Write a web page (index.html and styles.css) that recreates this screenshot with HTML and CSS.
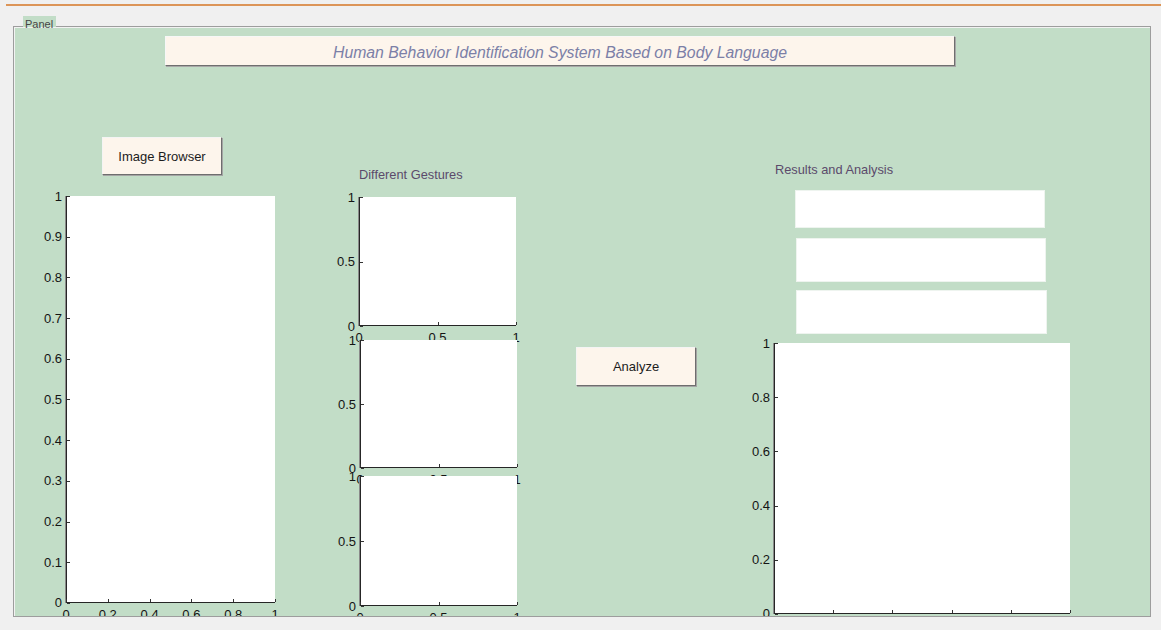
FILE: index.html
```html
<!DOCTYPE html>
<html lang="en">
<head>
<meta charset="utf-8">
<title>Human Behavior Identification System</title>
<link rel="stylesheet" href="styles.css">
</head>
<body>
<div class="topline"></div>

<div class="panel">
  <span class="panel-label">Panel</span>
  <div class="panel-body">
    <div class="title">Human Behavior Identification System Based on Body Language</div>

    <div class="row">
      <!-- image column -->
      <div class="col col-image">
        <button class="btn btn-browse" type="button">Image Browser</button>
        <div class="axes axes-image">
          <div class="yticks">
            <span class="yt">1</span><span class="yt">0.9</span><span class="yt">0.8</span><span class="yt">0.7</span>
            <span class="yt">0.6</span><span class="yt">0.5</span><span class="yt">0.4</span><span class="yt">0.3</span>
            <span class="yt">0.2</span><span class="yt">0.1</span><span class="yt">0</span>
          </div>
          <div class="xticks">
            <span class="xt">0</span><span class="xt">0.2</span><span class="xt">0.4</span>
            <span class="xt">0.6</span><span class="xt">0.8</span><span class="xt">1</span>
          </div>
        </div>
      </div>

      <!-- gestures column -->
      <div class="col col-gestures">
        <div class="caption">Different Gestures</div>
        <div class="axes axes-g1">
          <div class="yticks"><span class="yt">1</span><span class="yt">0.5</span><span class="yt">0</span></div>
          <div class="xticks"><span class="xt">0</span><span class="xt">0.5</span><span class="xt">1</span></div>
        </div>
        <div class="axes axes-g2">
          <div class="yticks"><span class="yt">1</span><span class="yt">0.5</span><span class="yt">0</span></div>
          <div class="xticks"><span class="xt">0</span><span class="xt">0.5</span><span class="xt">1</span></div>
        </div>
        <div class="axes axes-g3">
          <div class="yticks"><span class="yt">1</span><span class="yt">0.5</span><span class="yt">0</span></div>
          <div class="xticks"><span class="xt">0</span><span class="xt">0.5</span><span class="xt">1</span></div>
        </div>
      </div>

      <!-- action column -->
      <div class="col col-action">
        <button class="btn btn-analyze" type="button">Analyze</button>
      </div>

      <!-- results column -->
      <div class="col col-results">
        <div class="caption caption-results">Results and Analysis</div>
        <div class="result-box box1"></div>
        <div class="result-box box2"></div>
        <div class="result-box box3"></div>
        <div class="axes axes-results">
          <div class="yticks">
            <span class="yt">1</span><span class="yt">0.8</span><span class="yt">0.6</span>
            <span class="yt">0.4</span><span class="yt">0.2</span><span class="yt">0</span>
          </div>
          <div class="xticks">
            <span class="xt">0</span><span class="xt">0.2</span><span class="xt">0.4</span>
            <span class="xt">0.6</span><span class="xt">0.8</span><span class="xt">1</span>
          </div>
        </div>
      </div>
    </div>
  </div>
</div>
</body>
</html>
```

FILE: styles.css
```css
* {
  box-sizing: border-box;
}

html,
body {
  margin: 0;
  padding: 0;
  background: #f0f0f0;
  font-family: "Liberation Sans", Arial, sans-serif;
  width: 1161px;
  height: 630px;
  overflow: hidden;
}

.topline {
  margin: 4px 0 0 6px;
  height: 2px;
  background: #dc9558;
}

/* figure panel */
.panel {
  position: relative;
  margin: 20px 0 0 13px;
  width: 1138px;
  height: 591px;
  background: #c2ddc7;
  border: 1px solid #9d9d9d;
  box-shadow: inset 1px 1px 0 #f2f2f2;
}

.panel-label {
  position: absolute;
  top: -11px;
  left: 9px;
  padding: 0 3px 0 2px;
  height: 11px;
  line-height: 16px;
  font-size: 11px;
  color: #444;
  background: #c2ddc7;
}

.panel-body {
  height: 589px;
  overflow: hidden;
}

.title {
  margin: 9px 0 0 151px;
  width: 790px;
  height: 30px;
  background: #fdf5ec;
  border: 1px solid;
  border-color: #f7f7f7 #6f6f6f #6f6f6f #f7f7f7;
  box-shadow: 1px 1px 0 #a8a8a8;
  font-style: italic;
  font-size: 15.8px;
  line-height: 31px;
  text-align: center;
  color: #7b7fa7;
}

.row {
  display: flex;
  align-items: flex-start;
}

.col {
  display: flex;
  flex-direction: column;
  align-items: flex-start;
}

/* push buttons */
.btn {
  display: block;
  padding: 0;
  background: #fdf5ec;
  border: 1px solid;
  border-color: #f4f4f4 #6e6e6e #6e6e6e #f4f4f4;
  box-shadow: 1px 1px 0 #a4a4a4;
  font-family: inherit;
  font-size: 13px;
  color: #1c1c1c;
  cursor: pointer;
}

.caption {
  height: 15px;
  font-size: 12.8px;
  line-height: 15px;
  color: #5b4a6b;
  white-space: nowrap;
}

/* axes */
.axes {
  position: relative;
  background: #fff;
  border-left: 1px solid #262626;
  border-bottom: 1px solid #262626;
  box-shadow: -1px 0 0 #8a8a8a;
}

.yticks {
  position: absolute;
  top: 0;
  bottom: -1px;
  right: calc(100% + 1px);
  display: flex;
  flex-direction: column;
  justify-content: space-between;
}

.yt {
  position: relative;
  height: 0;
  display: flex;
  align-items: center;
  justify-content: flex-end;
  padding-right: 4px;
  font-size: 13px;
  line-height: 15px;
  color: #141414;
  white-space: nowrap;
}

.yt::after {
  content: "";
  position: absolute;
  left: calc(100% + 1px);
  top: 0;
  width: 3px;
  height: 1px;
  background: #333;
}

.xticks {
  position: absolute;
  top: 100%;
  left: -1px;
  right: 0;
  display: flex;
  justify-content: space-between;
}

.xt {
  position: relative;
  width: 0;
  display: flex;
  justify-content: center;
  padding-top: 5px;
  font-size: 13px;
  line-height: 15px;
  color: #141414;
  white-space: nowrap;
}

.xt::before {
  content: "";
  position: absolute;
  left: 0;
  bottom: 100%;
  width: 1px;
  height: 3px;
  background: #333;
}

/* image column */
.col-image {
  margin-left: 52px;
  width: 209px;
}

.btn-browse {
  margin: 71px 0 0 36px;
  width: 120px;
  height: 38px;
}

.axes-image {
  margin-top: 21px;
  width: 209px;
  height: 407px;
}

/* gestures column */
.col-gestures {
  margin-left: 84px;
  width: 158px;
}

.col-gestures .caption {
  margin-top: 101px;
}

.axes-g1 {
  margin-top: 15px;
  width: 157px;
  height: 129px;
}

.axes-g2 {
  margin: 14px 0 0 1px;
  width: 157px;
  height: 128px;
}

.axes-g3 {
  margin: 8px 0 0 1px;
  width: 157px;
  height: 130px;
}

/* action column */
.col-action {
  margin-left: 59px;
}

.btn-analyze {
  margin-top: 281px;
  width: 120px;
  height: 39px;
}

/* results column */
.col-results {
  margin-left: 78px;
  width: 296px;
}

.caption-results {
  margin: 96px 0 0 1px;
}

.result-box {
  background: #fff;
  border: 1px solid #eef4ef;
}

.box1 {
  margin: 13px 0 0 21px;
  width: 250px;
  height: 38px;
}

.box2 {
  margin: 10px 0 0 22px;
  width: 250px;
  height: 44px;
}

.box3 {
  margin: 8px 0 0 22px;
  width: 251px;
  height: 44px;
}

.axes-results {
  margin-top: 9px;
  width: 296px;
  height: 271px;
}
```
